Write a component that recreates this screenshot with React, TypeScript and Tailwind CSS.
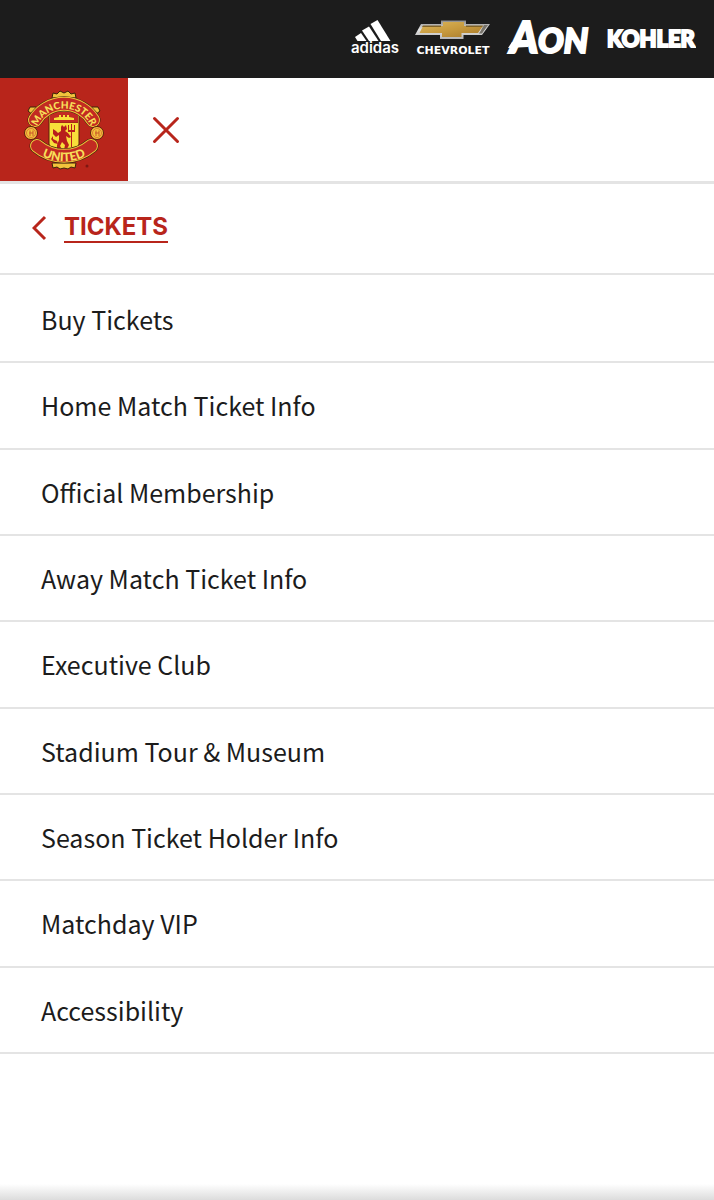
import type { ReactNode } from "react";

const menuItems = [
  "Buy Tickets",
  "Home Match Ticket Info",
  "Official Membership",
  "Away Match Ticket Info",
  "Executive Club",
  "Stadium Tour & Museum",
  "Season Ticket Holder Info",
  "Matchday VIP",
  "Accessibility",
];

const AdidasLogo = () => (
  <svg width="50" height="48" viewBox="0 -5 50 48" fill="#fff">
    <path d="M20.500 4 27.500 0 40.500 21H31Z" />
    <path d="M12 10.500 19 6.500 28.500 21H19Z" />
    <path d="M5 17 11 13 16.500 21H7.500Z" />
    <text
      x="25"
      y="33"
      textAnchor="middle"
      fontFamily="Inter, sans-serif"
      fontWeight="600"
      fontSize="15"
    >
      adidas
    </text>
  </svg>
);

const ChevroletLogo = () => (
  <svg width="78" height="48" viewBox="0 -5 78 48">
    <defs>
      <linearGradient id="gold" x1="0" y1="0" x2="1" y2="1">
        <stop offset="0" stopColor="#dcb75c" />
        <stop offset="0.5" stopColor="#c79a3e" />
        <stop offset="1" stopColor="#a87a2b" />
      </linearGradient>
      <linearGradient id="chrome" x1="0" y1="0" x2="0" y2="1">
        <stop offset="0" stopColor="#8b8b8b" />
        <stop offset="0.5" stopColor="#e4e4e4" />
        <stop offset="1" stopColor="#b5b5b5" />
      </linearGradient>
    </defs>
    <path d="M7 4H27V0.500H52V4H76L68 15H49.500V19H26V15H1Z" fill="url(#chrome)" />
    <path d="M9 6H29V2H50V6H69L64 13H47.500V17H28V13H5.500Z" fill="url(#gold)" />
    <path d="M9 5.500H27V7H8ZM52 5.500H69L68 7H52Z" fill="#7f6228" />
    <path d="M70 5H74L68 13.500H65Z" fill="#77736b" />
    <text
      x="39"
      y="34"
      textAnchor="middle"
      fill="#fff"
      fontFamily="DejaVu Sans, sans-serif"
      fontWeight="700"
      fontSize="11"
    >
      CHEVROLET
    </text>
  </svg>
);

const AonLogo = () => (
  <svg
    width="86"
    height="64"
    viewBox="0 -13 86 64"
    fill="#fff"
    stroke="#fff"
    strokeWidth="2"
    fontFamily="Lato, sans-serif"
    fontWeight="900"
    fontStyle="italic"
  >
    <text x="4" y="33" fontSize="43">
      A
    </text>
    <text x="32" y="33" fontSize="34">
      ON
    </text>
    <path d="M2 28 6 22H22V27Z" stroke="none" />
  </svg>
);

const KohlerLogo = () => (
  <svg width="90" height="48" viewBox="0 -5 90 48">
    <text
      x="45"
      y="27"
      textAnchor="middle"
      fill="#fff"
      stroke="#fff"
      strokeWidth="2"
      fontFamily="Lato, sans-serif"
      fontWeight="900"
      fontSize="22"
    >
      KOHLER
    </text>
  </svg>
);

const Ball = ({ cx }: { cx: number }) => (
  <g>
    <circle cx={cx} cy="49" r="6.500" fill="#f3c43c" stroke="#5f1a0c" />
    <circle cx={cx} cy="49" r="4.500" fill="none" stroke="#dd7a33" />
    <path
      d={`M${cx - 1} 46.500V52M${cx + 2} 46.500V52M${cx - 2} 49H${cx + 2}`}
      stroke="#c8552a"
    />
  </g>
);

const Crest = () => (
  <svg width="96" height="92" viewBox="0 0 96 92">
    <defs>
      <path id="topText" d="M19 53.500A29 29 0 0 1 77 53.500" />
      <path id="bottomText" d="M12 61A48 48 0 0 0 84 61" />
    </defs>
    {/* scrolls above and below the ribbons */}
    <g fill="#f1c33c" stroke="#3d220b" strokeWidth="1">
      <path d="M36 14 37 9 41 10 44 7 48 9 52 7 55 10 59 9 60 14Z" />
      <path d="M36 79 37 84 41 83 44 85 48 84 52 85 55 83 59 84 60 79Z" />
      <path d="M12 27 14 23 20 23 23 26 17 31Z" />
      <path d="M84 27 82 23 76 23 73 26 79 31Z" />
    </g>
    {/* shield */}
    <path
      d="M33 27H63V60Q62 65 56 66Q50 67 48 70Q46 67 40 66Q34 65 33 60Z"
      fill="#f8df3a"
      stroke="#5a210d"
      strokeWidth="1"
    />
    <path d="M34 28H62V38H34Z" fill="#c22a22" />
    <path
      d="M38 36V34L43 33V31H45V33H47V31H49V33H51V31H53V33L58 34V36Z"
      fill="#f8df3a"
    />
    <path d="M34 38.500H62" stroke="#a62818" strokeWidth="1" />
    {/* devil with trident */}
    <g fill="#b81f1c">
      <path d="M45 43 46 41 48 43 50 41 51 45 49 47 52 49 55 53 53 54 50 52 51 57 53 61 51 65 48 66 49 61 46 58 44 62 46 65 41 64 41 61 43 56 43 51 40 53 37 50 37 45 40 47 42 49 45 47Z" />
      <path d="M52 41H53V46H55V40H56V46H58V41H59V48H56V63H55V48H52Z" />
      <path d="M41 57 37 55 37 52 35 55 38 59 42 60Z" />
    </g>
    {/* ribbons */}
    <g fill="none" strokeLinecap="round">
      <path d="M19 36A34 34 0 0 1 77 36" stroke="#3d220b" strokeWidth="15" />
      <path d="M19 36A34 34 0 0 1 77 36" stroke="#f1c33c" strokeWidth="14" />
      <path d="M19 36A34 34 0 0 1 77 36" stroke="#c22a22" strokeWidth="12" />
      <path d="M21 62A42 42 0 0 0 75 62" stroke="#3d220b" strokeWidth="15" />
      <path d="M21 62A42 42 0 0 0 75 62" stroke="#f1c33c" strokeWidth="14" />
      <path d="M21 62A42 42 0 0 0 75 62" stroke="#c22a22" strokeWidth="12" />
    </g>
    <Ball cx={15} />
    <Ball cx={81} />
    <g
      fill="#f8e05a"
      fontFamily="Lato, sans-serif"
      fontWeight="900"
      textAnchor="middle"
    >
      <text fontSize="10">
        <textPath href="#topText" startOffset="50%">
          MANCHESTER
        </textPath>
      </text>
      <text fontSize="12">
        <textPath href="#bottomText" startOffset="50%">
          UNITED
        </textPath>
      </text>
    </g>
    <circle cx="71" cy="82" r="1.500" fill="#7d1712" />
  </svg>
);

const SponsorLink = ({ label, children }: { label: string; children: ReactNode }) => (
  <a href="#" aria-label={label} className="block">
    {children}
  </a>
);

const SponsorBar = () => (
  <div className="flex h-[78px] items-center justify-end gap-[14px] bg-[#1c1c1c] pr-[18px]">
    <SponsorLink label="adidas">
      <AdidasLogo />
    </SponsorLink>
    <SponsorLink label="Chevrolet">
      <ChevroletLogo />
    </SponsorLink>
    <SponsorLink label="Aon">
      <AonLogo />
    </SponsorLink>
    <SponsorLink label="Kohler">
      <KohlerLogo />
    </SponsorLink>
  </div>
);

const Header = () => (
  <header className="flex items-stretch border-b-3 border-[#e4e4e4]">
    <a
      href="#"
      aria-label="Manchester United"
      className="flex h-[103px] w-32 items-center justify-center bg-[#b8251b]"
    >
      <Crest />
    </a>
    <button aria-label="Close menu" className="ml-6 self-center">
      <svg
        width="28"
        height="28"
        viewBox="0 0 28 28"
        stroke="#b8251b"
        strokeWidth="3"
        strokeLinecap="round"
      >
        <path d="M2.500 2.500 25.500 25.500M25.500 2.500 2.500 25.500" />
      </svg>
    </button>
  </header>
);

const MenuTitle = () => (
  <div className="flex h-[91px] items-center border-b-2 border-[#e4e4e4] pb-0.5 pl-8">
    <button aria-label="Back" className="mr-4">
      <svg
        width="16"
        height="26"
        viewBox="0 0 16 26"
        fill="none"
        stroke="#b8251b"
        strokeWidth="3"
      >
        <path d="M13 2 2 13 13 24" />
      </svg>
    </button>
    <a
      href="#"
      className="border-b-2 border-[#b8251b] font-[Inter,sans-serif] text-2xl leading-7 font-bold text-[#b8251b]"
    >
      TICKETS
    </a>
  </div>
);

export default function App() {
  return (
    <div className="flex min-h-screen flex-col bg-white text-[#1c1c1c]">
      <SponsorBar />
      <Header />
      <nav aria-label="Tickets">
        <MenuTitle />
        <ul className="grid min-h-[779px] auto-rows-fr pt-0.5">
          {menuItems.map((item) => (
            <li key={item} className="border-b-2 border-[#e4e4e4]">
              <a
                href="#"
                className="flex h-full items-center px-[41px] font-['Noto_Sans_CJK_JP',sans-serif] text-[25px] leading-9"
              >
                {item}
              </a>
            </li>
          ))}
        </ul>
      </nav>
      <div className="mt-auto h-4 bg-linear-to-b from-white to-[#dcdcdc]" />
    </div>
  );
}
